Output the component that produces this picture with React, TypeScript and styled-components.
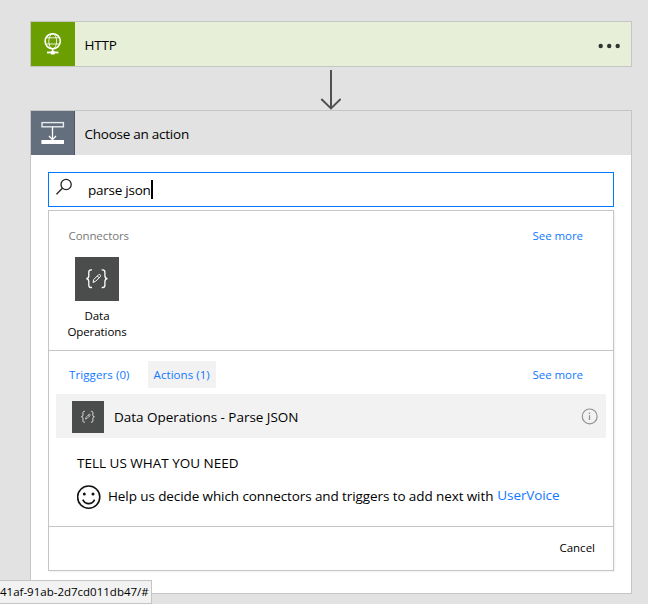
import React from "react";
import styled, { createGlobalStyle } from "styled-components";

const GlobalStyle = createGlobalStyle`
  * { box-sizing: border-box; }
  body {
    margin: 0;
    background: #e2e2e2;
    color: #000;
    font-family: "Open Sans", "Noto Sans", sans-serif;
  }
  svg { display: block; flex: none; }
`;

const Page = styled.main`
  position: relative;
  width: 648px;
  height: 604px;
  overflow: hidden;
  padding: 21px 16px 0 30px;
  background: #e2e2e2;
`;

const Label = styled.span<{ $track?: number }>`
  display: block;
  font-size: 13.5px;
  line-height: 20px;
  white-space: pre;
  letter-spacing: ${(p) => p.$track ?? 0}px;
`;

const SmallLabel = styled(Label)`
  font-size: 11.5px;
  line-height: 16px;
`;

const Card = styled.section`
  display: flex;
  flex-direction: column;
  border: 1px solid #c5c5c5;
`;

const CardHeader = styled.header<{ $bg: string }>`
  display: flex;
  align-items: center;
  gap: 9.5px;
  height: 44px;
  padding-right: 10px;
  background: ${(p) => p.$bg};

  ${Label} { margin-top: 2px; }
`;

const HeaderIcon = styled.div<{ $bg: string }>`
  width: 44px;
  height: 44px;
  background: ${(p) => p.$bg};
`;

const MenuDots = styled.svg`
  margin: 3px 0 0 auto;
`;

const Connector = styled.div`
  display: flex;
  justify-content: center;
  height: 43px;
  padding: 3px 2px 0 0;
`;

const CardBody = styled.div`
  height: 438px;
  padding: 17px;
  background: #fff;
`;

const SearchBox = styled.div`
  display: flex;
  height: 35px;
  padding: 5px 0 0 7px;
  border: 1px solid #0078ff;
`;

const SearchText = styled.div`
  display: flex;
  height: 20px;
  margin: 2px 0 0 15px;
`;

const Caret = styled.i`
  width: 2px;
  height: 19px;
  background: #000;
`;

const Results = styled.div`
  height: 361px;
  margin-top: 3px;
  border: 1px solid #c5c5c5;
  box-shadow: 1px 1px 2px rgba(0, 0, 0, 0.06);
`;

const ConnectorsSection = styled.div`
  height: 140px;
  padding: 17px 30px 0 19.5px;
  border-bottom: 1px solid #c5c5c5;
`;

const SectionRow = styled.div`
  display: flex;
  justify-content: space-between;
`;

const Muted = styled(SmallLabel)`
  color: #777;
`;

const SmallLink = styled(SmallLabel)`
  color: #0f78ff;
`;

const ConnectorTile = styled.div`
  display: flex;
  flex-direction: column;
  align-items: center;
  width: 60px;
  margin: 13px 0 0 -1.5px;
`;

const IconSquare = styled.div<{ $size: number }>`
  width: ${(p) => p.$size}px;
  height: ${(p) => p.$size}px;
  background: #4b4d4c;
`;

const TileCaption = styled.div`
  display: flex;
  flex-direction: column;
  align-items: center;
  margin-top: 7px;
`;

const OperationsSection = styled.div`
  height: 176px;
  padding: 10px 7px 0;
  border-bottom: 1px solid #c5c5c5;
`;

const Tabs = styled.div`
  display: flex;
  align-items: center;
  gap: 12px;
  height: 27px;
  padding: 0 23px 0 7px;

  > :last-child { margin-left: auto; }
`;

const Tab = styled.div<{ $active?: boolean }>`
  display: flex;
  align-items: center;
  height: 27px;
  padding: 0 6px;
  background: ${(p) => (p.$active ? "#f2f2f2" : "transparent")};
`;

const OperationRow = styled.div`
  display: flex;
  align-items: flex-start;
  gap: 10px;
  height: 44px;
  margin-top: 6px;
  padding: 7px 8px 0 16px;
  background: #f2f2f2;

  ${Label} { margin-top: 6px; }
  > :last-child { margin: 7px 0 0 auto; }
`;

const Feedback = styled.div`
  padding: 15px 0 0 21px;
`;

const FeedbackRow = styled.div`
  display: flex;
  align-items: flex-start;
  gap: 7px;
  margin-top: 12px;
`;

const Sentence = styled.div`
  display: flex;
  align-items: flex-start;
  gap: 4px;
  padding-top: 1px;
`;

const InlineLink = styled(Label)`
  margin-top: -1px;
  color: #0f78ff;
`;

const Footer = styled.footer`
  display: flex;
  justify-content: flex-end;
  padding: 13px 18px 0 0;
`;

const StatusBar = styled.div`
  position: absolute;
  left: 0;
  bottom: 0;
  width: 152px;
  height: 24px;
  padding-top: 3px;
  border: 1px solid #c5c5c5;
  border-left: 0;
  background: #f2f2f2;
`;

const GlobeIcon = () => (
  <svg width="44" height="44" fill="none" stroke="#fff">
    <circle cx="21.7" cy="19.3" r="7.6" strokeWidth="1.6" />
    <ellipse cx="21.7" cy="19.3" rx="3.9" ry="7.4" strokeWidth="1" opacity=".85" />
    <path d="M15.5 15.8h12.4M14.3 22h14.8" strokeWidth="1" opacity=".85" />
    <path d="M21.7 27v2" strokeWidth="1.4" />
    <path d="M16 30.5h11.4" strokeWidth="1.8" />
    <path d="M19.8 30.7h3.8" strokeWidth="3.6" />
  </svg>
);

const StepIcon = () => (
  <svg width="44" height="44" fill="none" stroke="#fff">
    <path d="M43.5 0v44" stroke="#4b5863" />
    <rect x="11" y="11.6" width="21.4" height="4.2" strokeWidth="1.4" stroke="#e8ebee" />
    <path d="M21.5 16v12.5M18 25l3.5 3.6 3.5-3.6" strokeWidth="1.3" />
    <rect x="10.4" y="29" width="22.6" height="4" fill="#fff" stroke="none" />
  </svg>
);

const BracesIcon = ({ size }: { size: number }) => (
  <svg width={size} height={size} viewBox={size > 40 ? "0 0 44 44" : "-4 -4 52 52"} fill="none" stroke="#fff">
    <path d="M17 12.8h-1c-1.6 0-2.2.9-2.2 2.3v3.6c0 1.7-.8 2.7-2.5 2.9 1.7.2 2.5 1.2 2.5 2.9v3.7c0 1.4.6 2.3 2.2 2.3h1" strokeWidth="1.3" />
    <path d="M26.7 12.8h1c1.6 0 2.2.9 2.2 2.3v3.6c0 1.7.8 2.7 2.5 2.9-1.7.2-2.5 1.2-2.5 2.9v3.7c0 1.4-.6 2.3-2.2 2.3h-1" strokeWidth="1.3" />
    <path d="M18 25.4l.8-2.9 4.8-4.8q.8-.6 1.6.2t.2 1.6l-4.8 4.8zM22.3 19l1.9 1.9" strokeWidth="1" />
  </svg>
);

const SearchIcon = () => (
  <svg width="17" height="17" fill="none" stroke="#222" strokeWidth="1.3">
    <circle cx="10.1" cy="6.5" r="5.1" />
    <path d="M6.4 10.2L.4 16.2" />
  </svg>
);

const DownArrow = () => (
  <svg width="22" height="40" fill="none" stroke="#505050" strokeWidth="2">
    <path d="M12 0v38M2.3 29l9.7 9.4 9.7-9.4" />
  </svg>
);

const InfoIcon = () => (
  <svg width="17" height="17" fill="none" stroke="#929292">
    <circle cx="8.7" cy="8.4" r="7.4" strokeWidth="1.2" />
    <path d="M8.5 7.3v4.8M8.5 4.5V6" strokeWidth="1.3" />
  </svg>
);

const SmileIcon = () => (
  <svg width="24" height="25" fill="none" stroke="#111">
    <circle cx="11.7" cy="12.1" r="11.1" strokeWidth="1.6" />
    <path d="M5.8 14.6c1.2 2.7 3.3 4 5.9 4s4.7-1.3 5.9-4" strokeWidth="1.6" />
    <circle cx="7.3" cy="9.1" r="1.5" fill="#111" stroke="none" />
    <circle cx="16" cy="9.1" r="1.5" fill="#111" stroke="none" />
  </svg>
);

export default function App() {
  return (
    <Page>
      <GlobalStyle />
      <Card>
        <CardHeader $bg="#e7efd9">
          <HeaderIcon $bg="#6b9e00"><GlobeIcon /></HeaderIcon>
          <Label $track={-0.2}>HTTP</Label>
          <MenuDots width="23" height="6" fill="#303530">
            <circle cx="2.7" cy="3" r="2.2" />
            <circle cx="11.2" cy="3" r="2.2" />
            <circle cx="19.7" cy="3" r="2.2" />
          </MenuDots>
        </CardHeader>
      </Card>
      <Connector><DownArrow /></Connector>
      <Card>
        <CardHeader $bg="#e2e2e2">
          <HeaderIcon $bg="#636f7d"><StepIcon /></HeaderIcon>
          <Label $track={-0.25}>Choose an action</Label>
        </CardHeader>
        <CardBody>
          <SearchBox>
            <SearchIcon />
            <SearchText>
              <Label $track={-0.24}>parse json</Label>
              <Caret />
            </SearchText>
          </SearchBox>
          <Results>
            <ConnectorsSection>
              <SectionRow>
                <Muted $track={-0.1}>Connectors</Muted>
                <SmallLink $track={-0.05}>See more</SmallLink>
              </SectionRow>
              <ConnectorTile>
                <IconSquare $size={44}><BracesIcon size={44} /></IconSquare>
                <TileCaption>
                  <SmallLabel>Data</SmallLabel>
                  <SmallLabel $track={-0.08}>Operations</SmallLabel>
                </TileCaption>
              </ConnectorTile>
            </ConnectorsSection>
            <OperationsSection>
              <Tabs>
                <Tab><SmallLink $track={0.1}>Triggers (0)</SmallLink></Tab>
                <Tab $active><SmallLink $track={0.05}>Actions (1)</SmallLink></Tab>
                <SmallLink $track={-0.05}>See more</SmallLink>
              </Tabs>
              <OperationRow>
                <IconSquare $size={32}><BracesIcon size={32} /></IconSquare>
                <Label $track={-0.03}>Data Operations - Parse JSON</Label>
                <InfoIcon />
              </OperationRow>
              <Feedback>
                <Label>TELL US WHAT YOU NEED</Label>
                <FeedbackRow>
                  <SmileIcon />
                  <Sentence>
                    <Label $track={-0.095}>Help us decide which connectors and triggers to add next with</Label>
                    <InlineLink $track={-0.1}>UserVoice</InlineLink>
                  </Sentence>
                </FeedbackRow>
              </Feedback>
            </OperationsSection>
            <Footer><SmallLabel>Cancel</SmallLabel></Footer>
          </Results>
        </CardBody>
      </Card>
      <StatusBar><SmallLabel>41af-91ab-2d7cd011db47/#</SmallLabel></StatusBar>
    </Page>
  );
}
